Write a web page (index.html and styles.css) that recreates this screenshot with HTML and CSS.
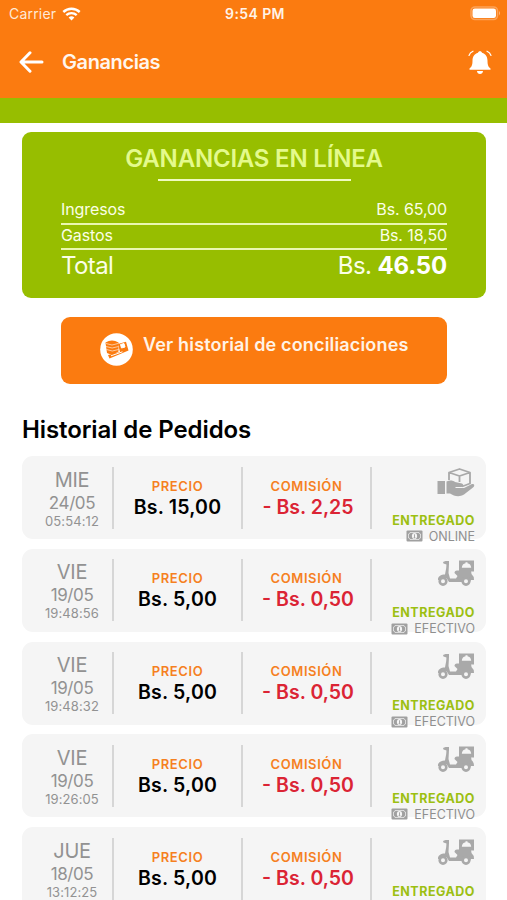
FILE: index.html
```
<!DOCTYPE html>
<html lang="es">
<head>
    <meta charset="UTF-8">
    <meta name="viewport" content="width=device-width, initial-scale=1.0">
    <title>Ganancias</title>
    <link rel="stylesheet" href="styles.css">
</head>
<body>
    <svg width="0" height="0" class="sprite">
        <symbol id="scooter" viewBox="0 0 38 27">
            <path d="M6 2 L8.500 1 H12 V4.500 H9.500 L6.500 3.500 Z" fill="#a9a9a9"/>
            <path d="M9.500 4 H12 L11.500 13 L13 18.500 H19 L20.500 16 L17.500 13 Q17.500 10.500 20 10.500 H34 L34.500 14 Q37 16 37 20 H34 L33 22 H12 L9.500 18 L8 19.500 L1 20 C0.500 16.500 4 14.500 8 14.500 L9.200 8 Z" fill="#a9a9a9"/>
            <path d="M22 0.500 H37 V11.500 H22 Z" fill="#a9a9a9"/>
            <path d="M24.800 7.800 C25 5 26.500 3.500 28.500 3.300 V2.300 H30.500 V3.300 C32.500 3.500 34 5 34.200 7.800 Z" fill="#f5f5f5"/>
            <circle cx="6" cy="21.300" r="3.300" fill="#f5f5f5" stroke="#a9a9a9" stroke-width="2.600"/>
            <circle cx="29" cy="21.300" r="3.300" fill="#f5f5f5" stroke="#a9a9a9" stroke-width="2.600"/>
        </symbol>
        <symbol id="cash" viewBox="0 0 17 12">
            <rect x="0.500" y="0.500" width="16" height="11" rx="1" fill="#a0a0a0"/>
            <path d="M4 2.500 H13 Q13 4 14.500 4 V8 Q13 8 13 9.500 H4 Q4 8 2.500 8 V4 Q4 4 4 2.500 Z" fill="none" stroke="#f5f5f5" stroke-width="0.700"/>
            <ellipse cx="8.500" cy="6" rx="2.600" ry="3.100" fill="#f5f5f5"/>
            <path d="M8.500 4.300 V7.800 M7.600 7.800 H9.400" stroke="#a0a0a0" stroke-width="0.900"/>
        </symbol>
        <symbol id="delivery" viewBox="0 0 38 29">
            <rect x="0.500" y="13" width="7.500" height="13" fill="#a9a9a9"/>
            <path d="M9.500 13.500 C13 12 16 12.500 18 14 L25 15.500 C27 16.500 26.500 19 24.500 19 H18.500 V20 H27 L34 16.500 C37 15 38.500 17.500 36 19.500 L27 26.500 C22 29.500 17 28 13 25.500 H9.500 Z" fill="#a9a9a9"/>
            <path d="M12 12 V4.500 L22.500 1 L33 4.500 V15.500 L25 18.500 M12 4.500 L22.500 8 L33 4.500 M22.500 8 V14" fill="none" stroke="#a9a9a9" stroke-width="1.800" stroke-linejoin="round"/>
        </symbol>
    </svg>

    <header class="header">
        <div class="status-bar">
            <div class="carrier">
                <span>Carrier</span>
                <svg width="19" height="14" viewBox="0 0 19 14">
                    <path d="M1.300 5 A12 12 0 0 1 17.700 5" fill="none" stroke="#fff" stroke-width="2.400"/>
                    <path d="M4.300 8.200 A7.600 7.600 0 0 1 14.700 8.200" fill="none" stroke="#fff" stroke-width="2.300"/>
                    <path d="M6.600 10.600 A4.200 4.200 0 0 1 12.400 10.600 L9.500 13.500 Z" fill="#fff"/>
                </svg>
            </div>
            <span class="clock">9:54 PM</span>
            <svg class="battery" width="31" height="15" viewBox="0 0 31 15">
                <rect x="1" y="1" width="26.500" height="12.500" rx="4" fill="none" stroke="#fff" stroke-opacity="0.300" stroke-width="1.600"/>
                <rect x="2.500" y="2.500" width="23.500" height="9.500" rx="2.300" fill="#fff"/>
                <path d="M29 5 Q31 7.200 29 9.500 Z" fill="#fff" fill-opacity="0.450"/>
            </svg>
        </div>
        <div class="nav-bar">
            <svg width="25" height="22" viewBox="0 0 25 22">
                <path d="M11 1.800 L2 11 L11 20.200 M2.500 11 H23" fill="none" stroke="#fff" stroke-width="3" stroke-linecap="round" stroke-linejoin="round"/>
            </svg>
            <h1 class="nav-title">Ganancias</h1>
            <svg class="bell" width="24" height="25" viewBox="0 0 24 25">
                <path d="M12 1.200 C13.200 1.200 13.800 1.900 14 2.700 C17.800 3.800 19.500 7 19.500 10.500 C19.500 15 20.300 16.800 22.500 18.500 V19.800 H1.500 V18.500 C3.700 16.800 4.500 15 4.500 10.500 C4.500 7 6.200 3.800 10 2.700 C10.200 1.900 10.800 1.200 12 1.200 Z M9 21 H15 C15 25 9 25 9 21 Z" fill="#fff"/>
                <path d="M5 1.200 Q2 2.500 1 5.500 M19 1.200 Q22 2.500 23 5.500" fill="none" stroke="#fff" stroke-width="1.200" stroke-linecap="round"/>
            </svg>
        </div>
    </header>
    <div class="strip"></div>

    <main class="content">
        <section class="summary">
            <h2 class="summary-title">GANANCIAS EN LÍNEA</h2>
            <div class="summary-line"></div>
            <div class="summary-row"><span>Ingresos</span><span>Bs. 65,00</span></div>
            <div class="summary-row"><span>Gastos</span><span>Bs. 18,50</span></div>
            <div class="summary-total"><span>Total</span><span>Bs. <b>46.50</b></span></div>
        </section>

        <button class="history-button">
            <svg width="33" height="33" viewBox="0 0 33 33">
                <circle cx="16.500" cy="16.500" r="16.300" fill="#fff"/>
                <path d="M18 11 L26 8.700 L28.500 17.500 L9.500 25.500 L8 22 L20 19 Z" fill="#fb7b10"/>
                <path d="M5.500 9.500 Q12 5.500 18.500 9.500 V18.500 Q13 23 7 20 Z" fill="#fb7b10"/>
                <path d="M6 10.500 Q12 13.500 18 10.500 M6 13.500 Q12 16.500 18.500 13.500 M6.500 16.500 Q12 19.500 18.500 16.500" fill="none" stroke="#fff" stroke-width="0.600"/>
                <path d="M20.500 11.500 L24 10.500 L25 14 L21.500 15 Z M11 22.800 L22.500 18.800" fill="#fff" stroke="#fff" stroke-width="1"/>
            </svg>
            <span>Ver historial de conciliaciones</span>
        </button>

        <h2 class="section-title">Historial de Pedidos</h2>

        <div class="orders">
            <div class="order">
                <div class="order-date">
                    <span class="day">MIE</span>
                    <span class="date">24/05</span>
                    <span class="time">05:54:12</span>
                </div>
                <div class="order-amount">
                    <span class="label">PRECIO</span>
                    <span class="price">Bs. 15,00</span>
                </div>
                <div class="order-amount">
                    <span class="label">COMISIÓN</span>
                    <span class="commission">- Bs. 2,25</span>
                </div>
                <div class="order-status">
                    <svg class="type" width="38" height="29"><use href="#delivery"/></svg>
                    <span class="status">ENTREGADO</span>
                    <span class="payment"><svg width="17" height="12"><use href="#cash"/></svg><span>ONLINE</span></span>
                </div>
            </div>
            <div class="order">
                <div class="order-date">
                    <span class="day">VIE</span>
                    <span class="date">19/05</span>
                    <span class="time">19:48:56</span>
                </div>
                <div class="order-amount">
                    <span class="label">PRECIO</span>
                    <span class="price">Bs. 5,00</span>
                </div>
                <div class="order-amount">
                    <span class="label">COMISIÓN</span>
                    <span class="commission">- Bs. 0,50</span>
                </div>
                <div class="order-status">
                    <svg class="type" width="38" height="27"><use href="#scooter"/></svg>
                    <span class="status">ENTREGADO</span>
                    <span class="payment"><svg width="17" height="12"><use href="#cash"/></svg><span>EFECTIVO</span></span>
                </div>
            </div>
            <div class="order">
                <div class="order-date">
                    <span class="day">VIE</span>
                    <span class="date">19/05</span>
                    <span class="time">19:48:32</span>
                </div>
                <div class="order-amount">
                    <span class="label">PRECIO</span>
                    <span class="price">Bs. 5,00</span>
                </div>
                <div class="order-amount">
                    <span class="label">COMISIÓN</span>
                    <span class="commission">- Bs. 0,50</span>
                </div>
                <div class="order-status">
                    <svg class="type" width="38" height="27"><use href="#scooter"/></svg>
                    <span class="status">ENTREGADO</span>
                    <span class="payment"><svg width="17" height="12"><use href="#cash"/></svg><span>EFECTIVO</span></span>
                </div>
            </div>
            <div class="order">
                <div class="order-date">
                    <span class="day">VIE</span>
                    <span class="date">19/05</span>
                    <span class="time">19:26:05</span>
                </div>
                <div class="order-amount">
                    <span class="label">PRECIO</span>
                    <span class="price">Bs. 5,00</span>
                </div>
                <div class="order-amount">
                    <span class="label">COMISIÓN</span>
                    <span class="commission">- Bs. 0,50</span>
                </div>
                <div class="order-status">
                    <svg class="type" width="38" height="27"><use href="#scooter"/></svg>
                    <span class="status">ENTREGADO</span>
                    <span class="payment"><svg width="17" height="12"><use href="#cash"/></svg><span>EFECTIVO</span></span>
                </div>
            </div>
            <div class="order">
                <div class="order-date">
                    <span class="day">JUE</span>
                    <span class="date">18/05</span>
                    <span class="time">13:12:25</span>
                </div>
                <div class="order-amount">
                    <span class="label">PRECIO</span>
                    <span class="price">Bs. 5,00</span>
                </div>
                <div class="order-amount">
                    <span class="label">COMISIÓN</span>
                    <span class="commission">- Bs. 0,50</span>
                </div>
                <div class="order-status">
                    <svg class="type" width="38" height="27"><use href="#scooter"/></svg>
                    <span class="status">ENTREGADO</span>
                </div>
            </div>
        </div>
    </main>
</body>
</html>
```

FILE: styles.css
```
* {
    box-sizing: border-box;
}
body {
    font-family: Inter, "Liberation Sans", sans-serif;
    margin: 0;
    height: 900px;
    overflow: hidden;
    background-color: #fff;
    color: #000;
}
h1, h2 {
    margin: 0;
    font-weight: 600;
}
svg {
    display: block;
    flex: none;
}
span {
    white-space: nowrap;
}
.sprite {
    position: absolute;
}
.header {
    height: 98px;
    background-color: #fb7b10;
    color: #fff;
}
.status-bar {
    display: grid;
    grid-template-columns: 1fr auto 1fr;
    align-items: center;
    height: 27px;
    padding: 0 6px 0 9px;
    font-size: 14px;
}
.carrier {
    display: flex;
    align-items: center;
    gap: 6px;
    letter-spacing: 0.2px;
    color: #ffe9d6;
}
.clock {
    font-weight: 600;
    letter-spacing: 0.4px;
    color: #fff3e8;
}
.battery {
    justify-self: end;
}
.nav-bar {
    display: flex;
    align-items: center;
    height: 70px;
    padding: 0 15px 0 19px;
}
.nav-title {
    margin-left: 18px;
    font-size: 20px;
    letter-spacing: -0.4px;
    color: #fff6ee;
}
.bell {
    margin-left: auto;
}
.strip {
    height: 25px;
    background-color: #97be00;
}
.content {
    padding: 9px 21px 0 22px;
}
.summary {
    height: 166px;
    padding: 12px 39px 0;
    background-color: #97be00;
    border-radius: 9px;
    color: #fbffe6;
}
.summary-title {
    font-size: 24px;
    line-height: 30px;
    letter-spacing: -0.2px;
    text-align: center;
    color: #e4fa8c;
}
.summary-line {
    width: 193px;
    height: 2px;
    margin: 5px auto 18px;
    background-color: #f0fbc0;
}
.summary-row {
    display: flex;
    justify-content: space-between;
    height: 25.500px;
    border-bottom: 2px solid #eaf7b0;
    font-size: 16px;
    line-height: 21px;
    letter-spacing: -0.1px;
}
.summary-total {
    display: flex;
    justify-content: space-between;
    font-size: 24px;
    line-height: 32px;
    letter-spacing: -0.600px;
}
.summary-total b {
    font-weight: 700;
    letter-spacing: -0.2px;
    color: #fff;
}
.history-button {
    display: flex;
    gap: 10px;
    width: 386px;
    height: 67px;
    margin: 19px auto 0;
    padding: 16px 38px 16px 39px;
    border: none;
    border-radius: 9px;
    background-color: #fb7b10;
    color: #fff3e6;
    font-family: inherit;
    font-size: 18px;
    font-weight: 600;
    line-height: 24px;
    letter-spacing: 0.17px;
    cursor: pointer;
}
.section-title {
    margin: 30px 0 10px;
    font-size: 24px;
    line-height: 32px;
    letter-spacing: -0.1px;
}
.orders {
    display: flex;
    flex-direction: column;
    gap: 9.800px;
}
.order {
    display: grid;
    grid-template-columns: 82px 129px 129px 1fr;
    flex: none;
    height: 83px;
    padding: 10.500px 11px 10px 10px;
    background-color: #f5f5f5;
    border-radius: 11px;
}
.order-date,
.order-amount {
    display: flex;
    flex-direction: column;
    align-items: center;
    height: 62px;
    border-right: 2px solid #d6d6d6;
}
.order-date {
    color: #929292;
}
.day {
    font-size: 20px;
    line-height: 27px;
    letter-spacing: -0.3px;
}
.date {
    font-size: 17px;
    line-height: 19px;
    letter-spacing: -0.4px;
}
.time {
    font-size: 13px;
    line-height: 16px;
    letter-spacing: 0.1px;
}
.order-amount {
    padding-top: 10px;
}
.label {
    font-size: 13px;
    font-weight: 600;
    line-height: 18px;
    letter-spacing: 0.600px;
    color: #f5801f;
}
.price,
.commission {
    font-size: 19.500px;
    font-weight: 600;
    line-height: 24px;
    letter-spacing: 0.200px;
}
.commission {
    padding-left: 3px;
    letter-spacing: 0;
    color: #db2434;
}
.order-status {
    display: flex;
    flex-direction: column;
    align-items: flex-end;
    height: 77px;
}
.order:last-child .order-status {
    height: 62px;
}
.type {
    margin-top: 1px;
    margin-bottom: auto;
}
.status {
    font-size: 12.500px;
    font-weight: 700;
    line-height: 16px;
    letter-spacing: 0.500px;
    color: #9cbf12;
}
.payment {
    display: flex;
    align-items: center;
    gap: 6px;
    font-size: 12.500px;
    line-height: 15px;
    color: #8f8f8f;
}
```
